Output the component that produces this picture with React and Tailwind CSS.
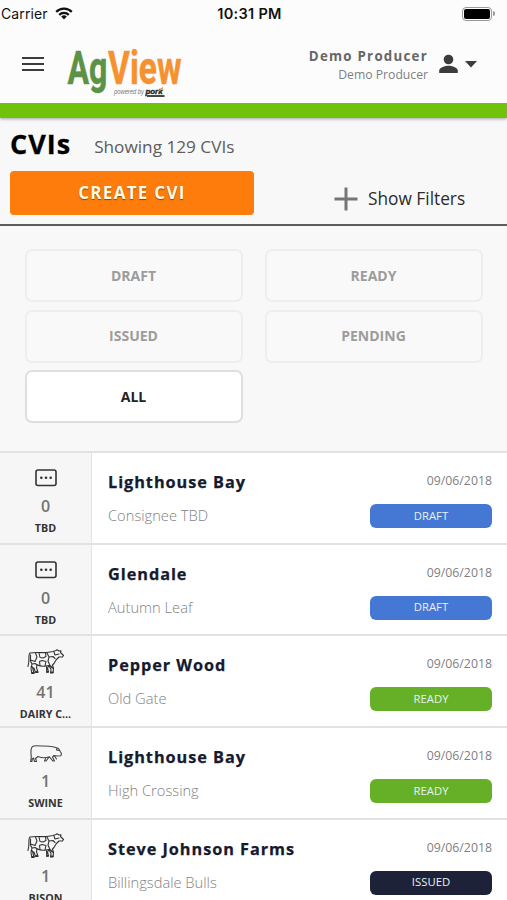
const FONT = 'font-["Open_Sans","Noto_Sans",sans-serif]';

const rows = [
  { name: 'Lighthouse Bay', to: 'Consignee TBD', status: 'DRAFT', count: 0, kind: 'TBD', icon: 'tbd' },
  { name: 'Glendale', to: 'Autumn Leaf', status: 'DRAFT', count: 0, kind: 'TBD', icon: 'tbd' },
  { name: 'Pepper Wood', to: 'Old Gate', status: 'READY', count: 41, kind: 'DAIRY C...', icon: 'cow' },
  { name: 'Lighthouse Bay', to: 'High Crossing', status: 'READY', count: 1, kind: 'SWINE', icon: 'pig' },
  { name: 'Steve Johnson Farms', to: 'Billingsdale Bulls', status: 'ISSUED', count: 1, kind: 'BISON', icon: 'cow' },
];

const badge = { DRAFT: 'bg-[#4478d4]', READY: 'bg-[#65b027]', ISSUED: 'bg-[#1d2239]' };

function Wifi() {
  return (
    <svg width="18" height="13" viewBox="0 0 18 13" className="ml-[7px]" fill="none" stroke="#111" strokeWidth="2.2">
      <path d="M1.2 4.9a11 11 0 0 1 15.6 0" />
      <path d="M4.2 7.9a6.8 6.8 0 0 1 9.6 0" />
      <path d="M9 12.4 6.2 9.6a4 4 0 0 1 5.6 0z" fill="#111" stroke="none" />
    </svg>
  );
}

function Logo() {
  return (
    <svg width="120" height="60" viewBox="0 0 120 60" className="ml-[22px] shrink-0">
      <g fontFamily="Roboto, sans-serif" fontWeight="700" fontSize="46" strokeWidth=".5">
        <text x="1.5" y="44" fill="#5b9245" stroke="#5b9245" textLength="40" lengthAdjust="spacingAndGlyphs">Ag</text>
        <text x="42" y="44" fill="#f5922f" stroke="#f5922f" textLength="73.5" lengthAdjust="spacingAndGlyphs">View</text>
      </g>
      <text x="48" y="54" fontFamily="Liberation Sans, sans-serif" fontStyle="italic" fontSize="7" fill="#777" textLength="30" lengthAdjust="spacingAndGlyphs">powered by</text>
      <text x="79.5" y="54" fontFamily="Liberation Sans, sans-serif" fontWeight="700" fontStyle="italic" fontSize="8" fill="#222" stroke="#222" strokeWidth=".4" textLength="17" lengthAdjust="spacingAndGlyphs">pork</text>
      <path d="M93 51l4-3.5" stroke="#f5922f" strokeWidth="1.2" />
      <path d="M81 56h17.500" stroke="#333" strokeWidth="1.8" />
    </svg>
  );
}

function TbdIcon() {
  return (
    <svg width="22" height="18" viewBox="0 0 22 18" fill="none" stroke="#333" strokeWidth="1.6">
      <rect x="1" y="1" width="20" height="15.500" rx="2" />
      <g fill="#333" stroke="none">
        <circle cx="6.300" cy="8.700" r="1.300" />
        <circle cx="11" cy="8.700" r="1.300" />
        <circle cx="15.700" cy="8.700" r="1.300" />
      </g>
    </svg>
  );
}

function CowIcon() {
  return (
    <svg width="38" height="26" viewBox="0 0 38 26" fill="none" stroke="#333" strokeWidth="1.1" strokeLinejoin="round" strokeLinecap="round">
      <path d="M3 4C1.500 5 2 9 1.800 13L1 17.500M3 4C8 3 15 4 20 3.500L26 2.500 29 1.500 30 .8 32 2 34 1.800 33.500 3.500 36.500 6.500 35.500 8 32 8 29 11 27 14.500 25.500 16 26.500 19.500 26 24H23.500L24 20.500 22 16.500C18 17.500 13 17.500 10 15.800L9.500 18.500 11 23.500H8.500L7 19 6 20.500 7 24.500H4.800L4 19.500 5 15 3.500 12V6" />
      <path d="M3.500 11 8 12.500 10 8 8.500 4M12 4 13 8.500 16 9 19 7.500 18.500 4M13 16.500 12.500 12.500 15 11.500 19 12.500 18 17M20 4 22 8 26 7.500 28 9.500M22 8 21 12 23 16.500M27 3 28 6 32 5M5 15 8 14.500 10 15.800M22 16.500 20.500 19 21.500 23 19.800 23.500 19.500 17.500" />
      <path d="M5 23.800h2M9 22.800h1.500M20 22.800h1.300M24 23.300h2M4.500 17.500l1.800 2M23.500 17l2 2" strokeWidth="1.6" />
    </svg>
  );
}

function PigIcon() {
  return (
    <svg width="34" height="19" viewBox="0 0 34 19" fill="none" stroke="#444" strokeWidth="1.1" strokeLinejoin="round" strokeLinecap="round">
      <path d="M3 3C4.500 1.300 8 1.600 12 2 17 1.900 21 2 25 3L29 4.200 30.500 6 31.500 8 32.500 9.500 31.800 11.800 28 12 25 11.500 23.500 13 25.500 17H23.800L20.500 12.800C17 14 12 13.800 9 12.500L6.500 14.500 7.500 17.500H5.500L4.500 14 3.200 15 3 17.500H1.600L2.300 13 2 10C1.600 7 1.800 5 3 3ZM28 4 27.500 6 30 6.500M20 13.200 17 17H15.500L17 13.600M25.500 12 27.500 15" />
    </svg>
  );
}

const icons = { tbd: <TbdIcon />, cow: <CowIcon />, pig: <PigIcon /> };

function Filter({ children, active }) {
  return (
    <button
      className={
        'h-[53px] rounded-[7px] border-2 pb-px text-[14px] font-bold ' +
        (active ? 'border-[#dfdfdf] bg-white text-[#222]' : 'border-[#eeeeee] bg-[#f9f9f9] text-[#9c9c9c]')
      }
    >
      {children}
    </button>
  );
}

function Row({ r }) {
  return (
    <div className="flex h-[91.700px] border-t-2 border-[#e2e2e2] bg-white">
      <div className="flex w-[92px] shrink-0 flex-col items-center border-r border-[#e4e4e4] bg-[#f6f6f6]">
        <div className={'flex items-start ' + (r.icon === 'tbd' ? 'h-[42px] pt-[16px]' : r.icon === 'cow' ? 'h-[45px] pt-[13px]' : 'h-[42px] pt-[16px]')}>
          {icons[r.icon]}
        </div>
        <div className="text-[16px] font-semibold leading-[22px] text-[#737373]">{r.count}</div>
        <div className="text-[10.700px] font-bold leading-[22px] text-[#333]">{r.kind}</div>
      </div>
      <div className="flex min-w-0 flex-1 justify-between pl-4 pr-[15px]">
        <div className="pt-[17px]">
          <div className="whitespace-nowrap text-[16.300px] font-bold leading-[24px] tracking-[0.950px] text-[#161a2e] [-webkit-text-stroke:0.25px_#161a2e]">{r.name}</div>
          <div className="mt-[10px] whitespace-nowrap text-[14.700px] font-light leading-[22px] text-[#828282]">{r.to}</div>
        </div>
        <div className="flex w-[122px] shrink-0 flex-col items-end pt-[18px]">
          <div className="text-[12.300px] leading-[20px] text-[#808080]">09/06/2018</div>
          <div className={'mt-[13px] flex h-[24px] w-full items-center justify-center rounded-[6px] text-[11.300px] text-[#e9f1f6] ' + badge[r.status]}>
            {r.status}
          </div>
        </div>
      </div>
    </div>
  );
}

export default function App() {
  return (
    <div className={'h-[900px] w-[507px] overflow-hidden bg-[#f8f8f8] ' + FONT}>
      <header className="flex h-[118px] flex-col border-b-[15px] border-[#70c20a] bg-[#fcfcfc] shadow-[0_1px_3px_rgba(0,0,0,0.35)]">
        <div className="grid h-[27px] shrink-0 grid-cols-3 items-center font-['Inter','Liberation_Sans',sans-serif] text-[14px] text-[#111]">
          <div className="flex items-center pl-px">
            <span className="tracking-[0.100px]">Carrier</span>
            <Wifi />
          </div>
          <div className="whitespace-nowrap pr-[8px] text-center text-[14.500px] font-semibold tracking-[0.300px]">10:31 PM</div>
          <div className="flex items-center justify-end pr-[12px]">
            <div className="h-[14px] w-[30px] rounded-[4px] border border-[#999] p-px">
              <div className="h-full rounded-[2px] bg-black" />
            </div>
            <div className="ml-px h-[5px] w-[2px] rounded-r bg-[#999]" />
          </div>
        </div>
        <div className="flex h-[76px] items-center">
          <div className="-mt-[2px] ml-[22px] flex w-[22px] shrink-0 flex-col gap-[4px]">
            <div className="h-[2px] bg-[#3c3c3c]" />
            <div className="h-[2px] bg-[#3c3c3c]" />
            <div className="h-[2px] bg-[#3c3c3c]" />
          </div>
          <div className="mt-[9px]"><Logo /></div>
          <div className="ml-auto whitespace-nowrap text-right">
            <div className="text-[13.300px] font-bold leading-[19px] tracking-[1.250px] text-[#666]">Demo Producer</div>
            <div className="text-[12.200px] leading-[18px] text-[#808080]">Demo Producer</div>
          </div>
          <svg width="40" height="20" viewBox="0 0 40 20" className="-mt-[2px] ml-[10px] mr-[29px] shrink-0" fill="#3c3c3c">
            <circle cx="10.500" cy="5.500" r="4.800" />
            <path d="M1.200 19v-2.500c0-3 6-4.700 9.300-4.700s9.300 1.700 9.300 4.700V19zM27 7h12l-6 6.500z" />
          </svg>
        </div>
      </header>

      <section className="h-[108px] border-b-2 border-[#5c5c5c] px-[10px]">
        <div className="flex h-[53px] items-center">
          <h1 className="-mt-[3px] text-[27px] font-bold leading-none tracking-[1px] text-black [-webkit-text-stroke:0.3px_#000]">CVIs</h1>
          <span className="ml-[23px] mt-[5px] text-[17.200px] text-[#5c5c5c]">Showing 129 CVIs</span>
        </div>
        <div className="flex">
          <button className="h-[44px] w-[244px] rounded-[4px] bg-[#fd7c0b] text-[17px] font-bold tracking-[1.300px] text-[#fff8e0] [text-shadow:0_1px_1px_rgba(0,0,0,0.45)]">
            CREATE CVI
          </button>
          <div className="ml-[80px] mt-[11px] flex items-center text-[17.300px] text-[#2b2b2b]">
            <svg width="24" height="24" viewBox="0 0 24 24" stroke="#757575" strokeWidth="3">
              <path d="M12 .5v23M.5 12h23" />
            </svg>
            <span className="ml-[10px]">Show Filters</span>
          </div>
        </div>
      </section>

      <section className="grid h-[225px] grid-cols-2 content-start gap-x-[22px] gap-y-[7.500px] px-[24.500px] pt-[23px]">
        <Filter>DRAFT</Filter>
        <Filter>READY</Filter>
        <Filter>ISSUED</Filter>
        <Filter>PENDING</Filter>
        <Filter active>ALL</Filter>
      </section>

      <main>
        {rows.map((r, i) => <Row key={i} r={r} />)}
      </main>
    </div>
  );
}
